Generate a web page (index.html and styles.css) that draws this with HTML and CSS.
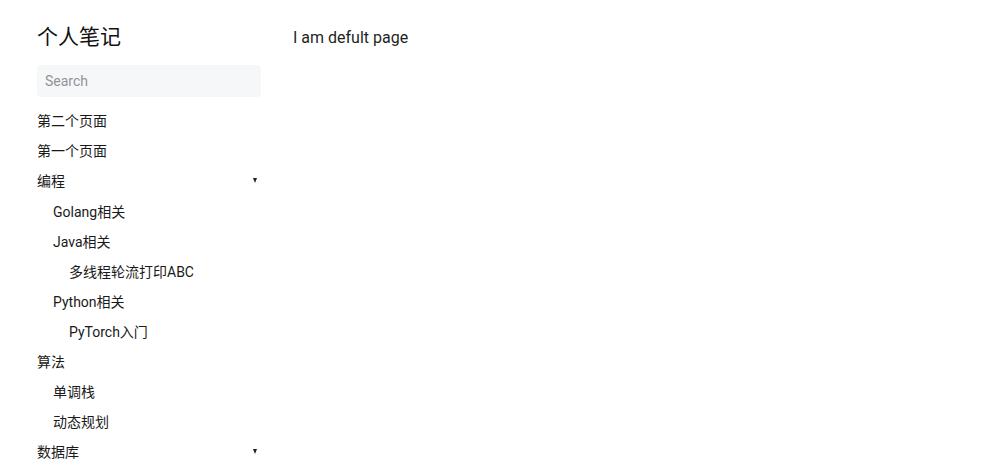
FILE: index.html
```html
<!DOCTYPE html>
<html lang="zh">
<head>
<meta charset="utf-8">
<title>个人笔记</title>
<link rel="stylesheet" href="styles.css">
</head>
<body>
<div class="layout">
  <aside class="sidebar">
    <h1 class="site-title">个人笔记</h1>
    <div class="search">Search</div>
    <ul class="menu">
      <li class="item">第二个页面</li>
      <li class="item">第一个页面</li>
      <li class="item group">编程<span class="caret"></span></li>
      <li class="item l2">Golang相关</li>
      <li class="item l2">Java相关</li>
      <li class="item l3">多线程轮流打印ABC</li>
      <li class="item l2">Python相关</li>
      <li class="item l3">PyTorch入门</li>
      <li class="item">算法</li>
      <li class="item l2">单调栈</li>
      <li class="item l2">动态规划</li>
      <li class="item group">数据库<span class="caret"></span></li>
    </ul>
  </aside>
  <main class="content">
    <p class="page-text">I am defult page</p>
  </main>
</div>
</body>
</html>
```

FILE: styles.css
```css
html, body {
  margin: 0;
  padding: 0;
  background: #fff;
}
body {
  font-family: Roboto, "Noto Sans CJK SC", sans-serif;
  color: #1f1f1f;
  overflow: hidden;
}
.layout {
  display: flex;
  gap: 32px;
  padding-left: 37px;
}
.sidebar {
  width: 224px;
  flex: none;
}
.site-title {
  margin: 22px 0 0;
  font-size: 21px;
  font-weight: 400;
  line-height: 30px;
  color: #111;
}
.search {
  margin-top: 13px;
  height: 32px;
  line-height: 32px;
  padding-left: 8px;
  background: #f6f7f9;
  border-radius: 4px;
  font-size: 14px;
  color: #8f949a;
}
.menu {
  list-style: none;
  margin: 8px 0 0;
  padding: 0;
}
.item {
  display: flex;
  align-items: center;
  justify-content: space-between;
  height: 30px;
  font-size: 14px;
  color: #1a1a1a;
}
.group {
  margin-bottom: 1px;
}
.l2 { padding-left: 16px; }
.l3 { padding-left: 32px; }
.caret {
  width: 0;
  height: 0;
  margin-right: 4px;
  border-left: 2.5px solid transparent;
  border-right: 2.5px solid transparent;
  border-top: 5px solid #222;
}
.content {
  flex: 1;
}
.page-text {
  margin: 26px 0 0;
  font-size: 16px;
  line-height: 24px;
  color: #1f1f1f;
}
```
